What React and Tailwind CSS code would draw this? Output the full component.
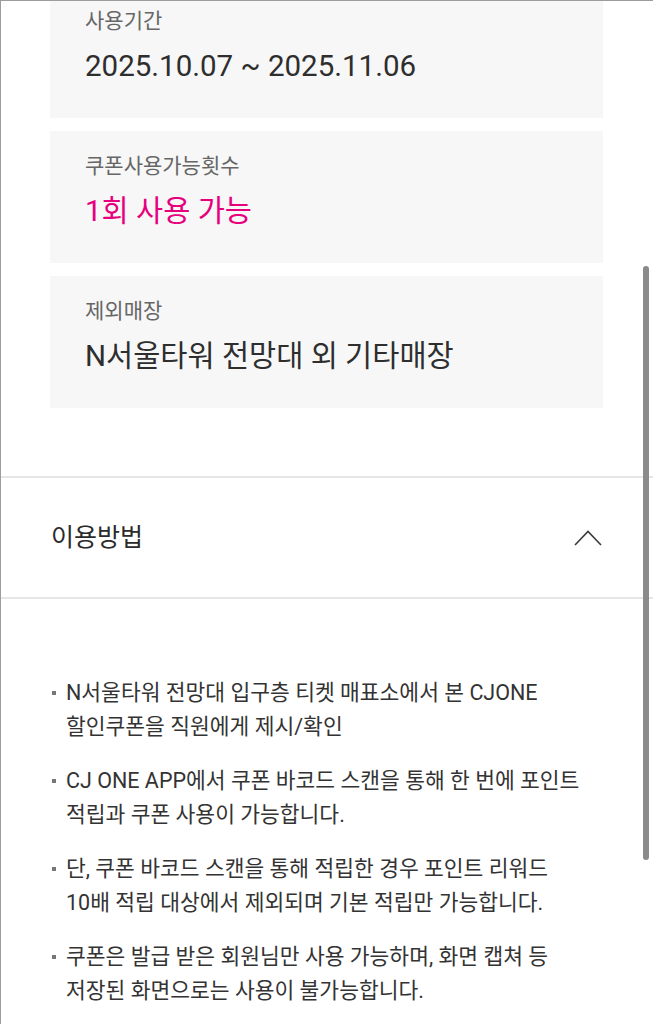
import { useState } from 'react'

const INFO = [
  { label: '사용기간', value: '2025.10.07 ~ 2025.11.06' },
  { label: '쿠폰사용가능횟수', value: '1회 사용 가능', accent: true },
  { label: '제외매장', value: 'N서울타워 전망대 외 기타매장' },
]

const GUIDE = [
  ['N서울타워 전망대 입구층 티켓 매표소에서 본 CJONE', '할인쿠폰을 직원에게 제시/확인'],
  ['CJ ONE APP에서 쿠폰 바코드 스캔을 통해 한 번에 포인트', '적립과 쿠폰 사용이 가능합니다.'],
  ['단, 쿠폰 바코드 스캔을 통해 적립한 경우 포인트 리워드', '10배 적립 대상에서 제외되며 기본 적립만 가능합니다.'],
  ['쿠폰은 발급 받은 회원님만 사용 가능하며, 화면 캡쳐 등', '저장된 화면으로는 사용이 불가능합니다.'],
]

export default function App() {
  const [open, setOpen] = useState(true)

  return (
    <div
      className="relative min-h-screen overflow-hidden bg-white border-t border-l border-[#9c9c9c]"
      style={{ fontFamily: 'Roboto, "Noto Sans CJK KR", sans-serif' }}
    >
      {/* Info cards */}
      <div className="-mt-[15px] pl-[49px] pr-[50px] flex flex-col gap-[13px]">
        {INFO.map((item) => (
          <InfoCard key={item.label} {...item} />
        ))}
      </div>

      {/* Accordion header */}
      <div className="mt-[68px] border-t-2 border-[#e6e6e6]">
        <button
          onClick={() => setOpen(!open)}
          className="w-full h-[119px] flex items-center justify-between pl-[50px] pr-[51px]"
        >
          <span className="text-[25px] leading-[32px] text-[#2b2b2b]">이용방법</span>
          <svg width="28" height="16" viewBox="0 0 28 16" fill="none">
            <polyline
              points={open ? '1,15 14,1.5 27,15' : '1,1 14,14.5 27,1'}
              stroke="#3a3a3a"
              strokeWidth="1.6"
            />
          </svg>
        </button>
      </div>

      {/* Guide list */}
      {open && (
        <div className="border-t-2 border-[#e6e6e6] pt-[77px] pb-10 pl-[51px] pr-[30px]">
          <ul className="flex flex-col gap-[20px]">
            {GUIDE.map((lines, i) => (
              <li key={i} className="flex text-[21.5px] leading-[34px] text-[#333333]">
                <div className="w-[14px] h-[34px] flex items-center shrink-0">
                  <span className="block w-[4px] h-[4px] bg-[#777777]" />
                </div>
                <div className="whitespace-nowrap">
                  {lines.map((line) => (
                    <div key={line}>{line}</div>
                  ))}
                </div>
              </li>
            ))}
          </ul>
        </div>
      )}

      {/* Scrollbar thumb */}
      <div className="absolute right-[4px] top-[265px] w-[6px] h-[594px] rounded-full bg-[#8a8a8a]" />
    </div>
  )
}

function InfoCard({ label, value, accent }) {
  return (
    <div className="bg-[#f7f7f7] pl-[35px] pt-[21px] pb-[32px]">
      <div className="text-[21px] leading-[28px] text-[#666666]">{label}</div>
      <div className={`mt-[11px] text-[29.5px] leading-[40px] ${accent ? 'text-[#e6007e]' : 'text-[#2e2e2e]'}`}>
        {value}
      </div>
    </div>
  )
}
